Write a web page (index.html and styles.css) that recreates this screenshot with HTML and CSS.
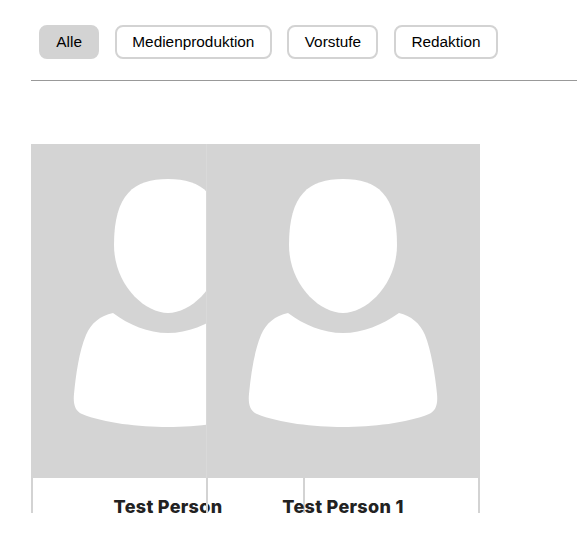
FILE: index.html
```html
<!DOCTYPE html>
<html lang="de">

<head>
  <meta charset="UTF-8">
  <title>Team</title>
  <link rel="stylesheet" href="styles.css">
</head>

<body>
  <main class="team">
    <!-- Filter -->
    <nav class="filter-bar">
      <button class="filter-button active">Alle</button>
      <button class="filter-button">Medienproduktion</button>
      <button class="filter-button">Vorstufe</button>
      <button class="filter-button">Redaktion</button>
    </nav>

    <!-- Cards -->
    <section class="card-list">
      <article class="card">
        <svg class="card-image" viewBox="-1 0 274 334">
          <use href="#avatar"></use>
        </svg>
        <h3 class="card-name">Test Person</h3>
      </article>
      <article class="card">
        <svg class="card-image" viewBox="-1 0 274 334">
          <defs>
            <g id="avatar">
              <rect x="-1" width="274" height="334" fill="#d4d4d4"></rect>
              <path fill="#fff" d="M136 35C102 35 82 50 82 101C82 140 112 169 136 169C160 169 190 140 190 101C190 50 170 35 136 35Z"></path>
              <path fill="#fff" d="M81 169C97 181 116 189 136 189C156 189 175 181 192 169C204 172 213 179 218 191C224 206 228 230 230 250C231 260 229 267 222 270C200 279 165 283 136 283C107 283 72 279 50 270C43 267 41 260 42 250C44 230 47 208 54 191C59 179 68 172 81 169Z"></path>
            </g>
          </defs>
          <use href="#avatar"></use>
          <rect x="-1" width="1" height="334" fill="#d9d9d9"></rect>
        </svg>
        <h3 class="card-name">Test Person 1</h3>
      </article>
    </section>
  </main>
</body>

</html>
```

FILE: styles.css
```css
body {
  margin: 0;
  padding: 0;
  background-color: #fff;
  font-family: "Liberation Sans", Arial, sans-serif;
}

.team {
  padding: 25px 0 0 31px;
}

.filter-bar {
  display: flex;
  gap: 15.6px;
  padding: 0 0 21px 8px;
  border-bottom: 1px solid #999;
}

.filter-button {
  height: 34px;
  padding: 0 15.36px;
  background-color: #fff;
  border: 2px solid #d3d3d3;
  border-radius: 8px;
  color: #000;
  font-family: inherit;
  font-size: 15.36px;
}

.filter-button.active {
  background-color: #d3d3d3;
}

.card-list {
  display: flex;
  height: 369px;
  margin-top: 63px;
  overflow: hidden;
}

.card {
  flex: 0 0 274px;
  box-sizing: border-box;
  margin-right: -99px;
  border-left: 2px solid #d3d3d3;
  border-right: 2px solid #d3d3d3;
}

.card-image {
  display: block;
  width: 274px;
  height: 334px;
  margin: 0 -2px;
}

.card-name {
  margin: 0;
  padding-top: 18px;
  color: #222;
  font-family: Inter, sans-serif;
  font-size: 18px;
  font-weight: 800;
  letter-spacing: 0.3px;
  line-height: 22px;
  text-align: center;
}
```
